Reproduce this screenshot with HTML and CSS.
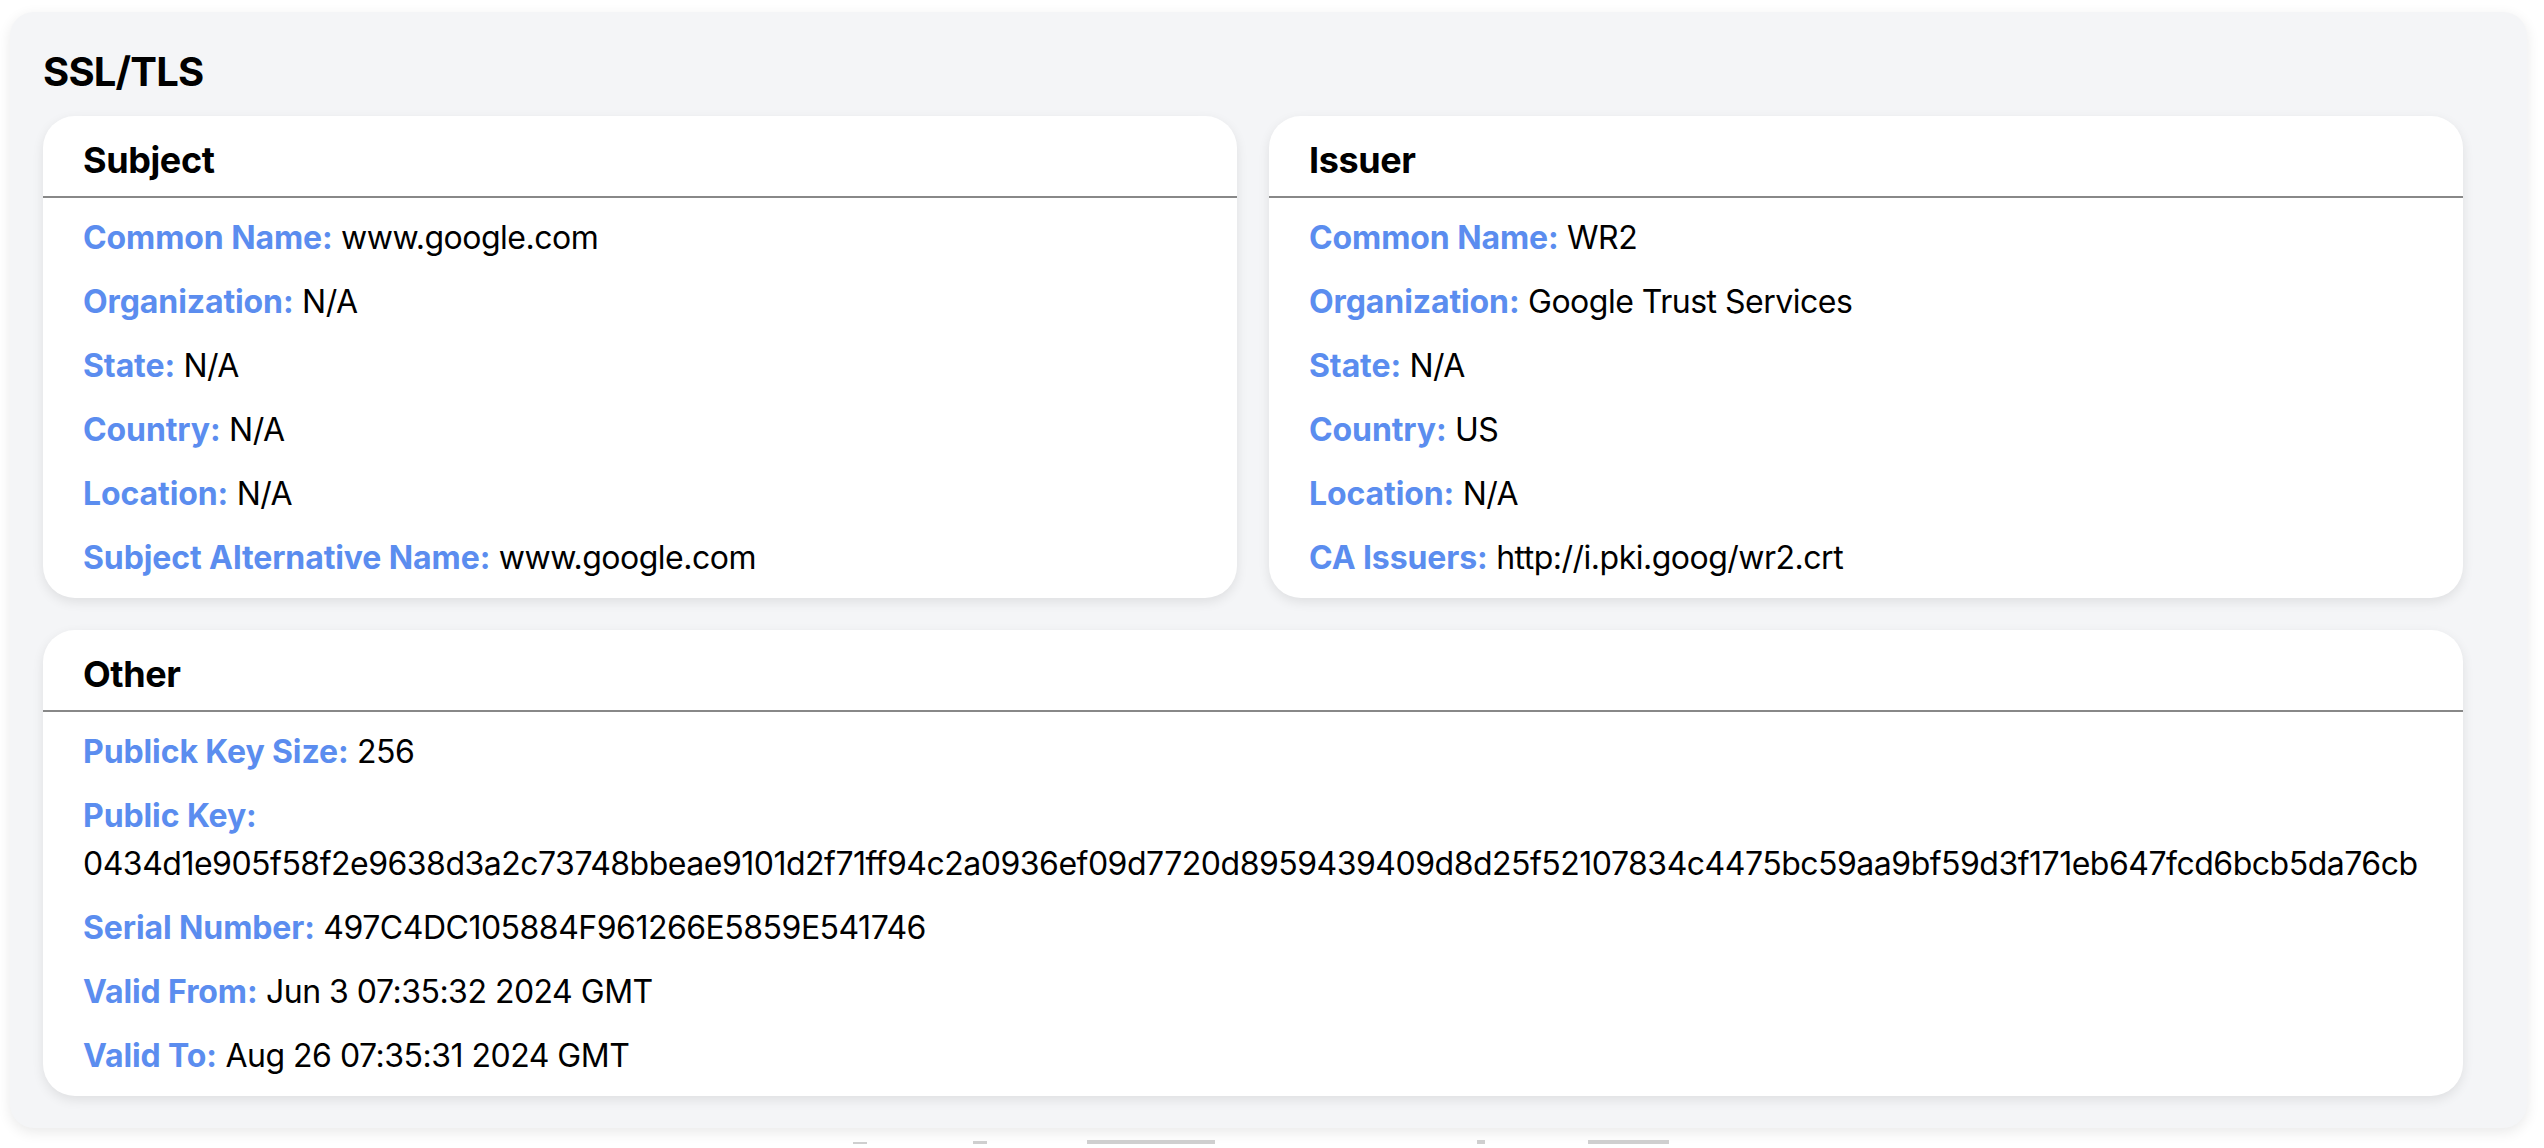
FILE: index.html
```html
<!DOCTYPE html>
<html>
<head>
<meta charset="utf-8">
<title>SSL/TLS</title>
<link rel="stylesheet" href="styles.css">
</head>
<body>
<section class="panel">
  <h2 class="panel-title">SSL/TLS</h2>
  <div class="grid">
    <div class="card">
      <h3 class="card-title">Subject</h3>
      <div class="card-body">
        <p class="row"><span class="label">Common Name:</span> www.google.com</p>
        <p class="row"><span class="label">Organization:</span> N/A</p>
        <p class="row"><span class="label">State:</span> N/A</p>
        <p class="row"><span class="label">Country:</span> N/A</p>
        <p class="row"><span class="label">Location:</span> N/A</p>
        <p class="row"><span class="label">Subject Alternative Name:</span> www.google.com</p>
      </div>
    </div>
    <div class="card">
      <h3 class="card-title">Issuer</h3>
      <div class="card-body">
        <p class="row"><span class="label">Common Name:</span> WR2</p>
        <p class="row"><span class="label">Organization:</span> Google Trust Services</p>
        <p class="row"><span class="label">State:</span> N/A</p>
        <p class="row"><span class="label">Country:</span> US</p>
        <p class="row"><span class="label">Location:</span> N/A</p>
        <p class="row"><span class="label">CA Issuers:</span> http://i.pki.goog/wr2.crt</p>
      </div>
    </div>
    <div class="card card-wide">
      <h3 class="card-title">Other</h3>
      <div class="card-body">
        <p class="row"><span class="label">Publick Key Size:</span> 256</p>
        <p class="row"><span class="label">Public Key:</span> 0434d1e905f58f2e9638d3a2c73748bbeae9101d2f71ff94c2a0936ef09d7720d8959439409d8d25f52107834c4475bc59aa9bf59d3f171eb647fcd6bcb5da76cb</p>
        <p class="row"><span class="label">Serial Number:</span> 497C4DC105884F961266E5859E541746</p>
        <p class="row"><span class="label">Valid From:</span> Jun 3 07:35:32 2024 GMT</p>
        <p class="row"><span class="label">Valid To:</span> Aug 26 07:35:31 2024 GMT</p>
      </div>
    </div>
  </div>
</section>
<div class="peek">
  <span class="peek-mark m1"></span>
  <span class="peek-mark m2"></span>
  <span class="peek-bar b1"></span>
  <span class="peek-mark m3"></span>
  <span class="peek-bar b2"></span>
</div>
</body>
</html>
```

FILE: styles.css
```css
* { box-sizing: border-box; }

html, body {
  margin: 0;
  padding: 0;
  background: #ffffff;
  height: 1148px;
  overflow: hidden;
}

body {
  font-family: Inter, "Noto Sans", "Liberation Sans", sans-serif;
  color: #000;
}

.panel {
  margin: 12px 0 0 10px;
  width: 2517px;
  padding: 32px 64px 32px 33px;
  background: #f4f5f7;
  border-radius: 24px;
  box-shadow: 0 4px 14px rgba(0, 0, 0, 0.09);
}

.panel-title {
  margin: 0 0 16px 0;
  font-size: 40px;
  line-height: 56px;
  font-weight: 700;
  letter-spacing: -0.8px;
}

.grid {
  display: grid;
  grid-template-columns: 1fr 1fr;
  gap: 32px;
}

.card {
  background: #ffffff;
  border-radius: 32px;
  box-shadow: 0 4px 12px rgba(0, 0, 0, 0.09);
}

.card-wide {
  grid-column: 1 / 3;
}

.card-title {
  margin: 0;
  padding: 16px 40px 8px 40px;
  font-size: 36px;
  line-height: 56px;
  font-weight: 700;
  letter-spacing: -0.4px;
  border-bottom: 2px solid #888888;
}

.card-body {
  padding: 16px 40px 16px 40px;
  display: flex;
  flex-direction: column;
  gap: 16px;
}

.row {
  margin: 0;
  font-size: 32px;
  line-height: 48px;
  font-weight: 400;
  letter-spacing: -0.5px;
}

.label {
  color: #5b8def;
  font-weight: 700;
  letter-spacing: -0.1px;
}

.peek {
  display: flex;
  align-items: flex-end;
  height: 9px;
  margin-top: 7px;
}

.peek-mark, .peek-bar {
  display: block;
  height: 4px;
  background: #cfcfcf;
}

.m1 { margin-left: 853px; width: 14px; height: 2px; }
.m2 { margin-left: 106px; width: 14px; height: 3px; }
.b1 { margin-left: 100px; width: 128px; }
.m3 { margin-left: 262px; width: 8px; }
.b2 { margin-left: 103px; width: 81px; }
```
